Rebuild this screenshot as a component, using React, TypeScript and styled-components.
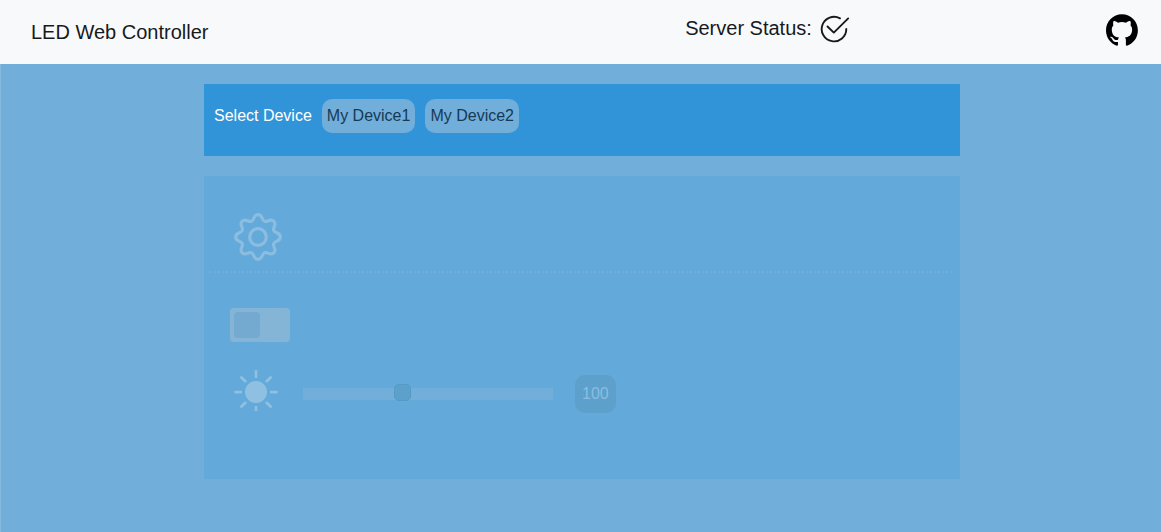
import React, { useState } from "react";
import styled, { createGlobalStyle } from "styled-components";
import { BsBrightnessHighFill } from "react-icons/bs";

const GlobalStyle = createGlobalStyle`
  *, *::before, *::after { box-sizing: border-box; }
  body {
    margin: 0;
    background: #71aeda;
    color: #212529;
    font: 16px/24px "Liberation Sans", Arial, sans-serif;
  }
`;

const Page = styled.div`
  display: flex;
  flex-direction: column;
  min-height: 100vh;
`;

const Header = styled.header`
  display: grid;
  grid-template-columns: 1fr auto 1fr;
  align-items: center;
  height: 64px;
  padding: 0 23px 0 31px;
  background: #f8f9fb;
  color: #17191b;
  font-size: 20px;
  line-height: 30px;
`;

const Brand = styled.a`
  color: inherit;
  text-decoration: none;
`;

const Status = styled.div`
  display: flex;
  align-items: center;
  gap: 8px;
  margin-left: 366px;
  padding-bottom: 8px;
`;

const RepoLink = styled.a`
  display: flex;
  justify-self: end;
  padding-bottom: 5px;
  color: #000;
`;

const Main = styled.main`
  display: flex;
  flex: 1;
  flex-direction: column;
  align-items: center;
  gap: 20px;
  padding: 20px 0 20px 2px;
  border-left: 1px solid #86b9df;
`;

const DeviceBar = styled.nav`
  display: flex;
  align-items: flex-start;
  gap: 10px;
  width: 100%;
  max-width: 756px;
  height: 72px;
  padding: 15px 10px;
  background: #3194d8;
`;

const DeviceLabel = styled.span`
  padding: 5px 0;
  color: #fff;
`;

const DeviceButton = styled.button`
  padding: 5px;
  border: 0;
  border-radius: 10px;
  background: #71aeda;
  color: #163a55;
  font: inherit;
  cursor: pointer;
`;

const Panel = styled.section`
  width: 100%;
  max-width: 756px;
  padding: 37px 5px 61px;
  background: #63a9d9;
`;

const SettingsButton = styled.button`
  display: flex;
  margin-left: 25px;
  padding: 0;
  border: 0;
  background: none;
  color: #8bbde1;
  cursor: pointer;
`;

const Divider = styled.hr`
  margin: 10px 3px 35px 0;
  border: 0;
  border-top: 2px dotted #70afdc;
`;

const Toggle = styled.input`
  display: block;
  width: 60px;
  height: 34px;
  margin: 0 0 28px 21px;
  padding: 4px;
  border-radius: 4px;
  background: #84b5d6;
  appearance: none;
  cursor: pointer;

  &::before {
    content: "";
    display: block;
    width: 26px;
    height: 26px;
    border-radius: 4px;
    background: #74a9d0;
  }

  &:checked::before {
    margin-left: auto;
  }
`;

const BrightnessRow = styled.div`
  display: flex;
  align-items: center;
  padding-left: 25px;
`;

const SunLabel = styled.label`
  display: flex;
  width: 44px;
  height: 41px;
  margin: 0 25px 7px 0;
  overflow: hidden;
  color: #8fc0e2;

  svg {
    flex: none;
  }
`;

const Slider = styled.input`
  width: 250px;
  height: 12px;
  margin: 0 22px 0 0;
  background: #71aeda;
  appearance: none;
  cursor: pointer;

  &::-webkit-slider-thumb {
    width: 17px;
    height: 17px;
    margin-top: -4px;
    border: 1px solid #5699c2;
    border-radius: 5px;
    background: #5ca0cc;
    appearance: none;
  }
`;

const Level = styled.output`
  padding: 7px;
  border-radius: 10px;
  background: #5ca0cb;
  color: #8bbde1;
`;

// A point at the given distance from the gear's centre, moved along the
// tangent there by the given length.
function polar(angle: number, radius: number, along = 0) {
  const x = 24 + radius * Math.sin(angle) + along * Math.cos(angle);
  const y = 24 - radius * Math.cos(angle) + along * Math.sin(angle);
  return `${x.toFixed(2)} ${y.toFixed(2)}`;
}

// Sixteen curves that run from peak to valley and back round the gear.
const gearOutline =
  `M${polar(0, 22.3)}` +
  Array.from({ length: 16 }, (_, i) => {
    const from = (i * Math.PI) / 8;
    const to = ((i + 1) * Math.PI) / 8;
    const leavesPeak = i % 2 === 0;
    const [r1, c1, r2, c2] = leavesPeak ? [22.3, 5, 17, 3.4] : [17, 3.4, 22.3, 5];
    return `C${polar(from, r1, c1)} ${polar(to, r2, -c2)} ${polar(to, r2)}`;
  }).join("") +
  "Z";

function GearIcon() {
  return (
    <svg width="48" height="48" viewBox="0 0 48 48" fill="none" stroke="currentColor" strokeWidth="3.2" strokeLinejoin="round">
      <path d={gearOutline} />
      <circle cx="24" cy="24" r="8.3" />
    </svg>
  );
}

function ConnectedIcon() {
  return (
    <svg width="30" height="30" viewBox="0 -1 30 30" fill="none" stroke="currentColor" strokeWidth="1.9" strokeLinecap="round" strokeLinejoin="round" role="img" aria-label="Connected">
      <path d="M20 4.3A12.3 12.3 0 1 0 26.3 15" />
      <path d="M7.5 12.5L13.8 18.6L28.2 4.4" />
    </svg>
  );
}

function GitHubIcon() {
  return (
    <svg width="32" height="32" viewBox="0 0 98 96" fill="currentColor">
      <path
        fillRule="evenodd"
        clipRule="evenodd"
        d="M48.854 0C21.839 0 0 22 0 49.217c0 21.756 13.993 40.172 33.405 46.69 2.427.49 3.316-1.059 3.316-2.362 0-1.141-.08-5.052-.08-9.127-13.59 2.934-16.42-5.867-16.42-5.867-2.184-5.704-5.42-7.17-5.42-7.17-4.448-3.015.324-3.015.324-3.015 4.934.326 7.523 5.052 7.523 5.052 4.367 7.496 11.404 5.378 14.235 4.074.404-3.178 1.699-5.378 3.074-6.6-10.839-1.141-22.243-5.378-22.243-24.283 0-5.378 1.94-9.778 5.014-13.2-.485-1.222-2.184-6.275.486-13.038 0 0 4.125-1.304 13.426 5.052a46.97 46.97 0 0 1 12.214-1.63c4.125 0 8.33.571 12.213 1.63 9.302-6.356 13.427-5.052 13.427-5.052 2.67 6.763.97 11.816.485 13.038 3.155 3.422 5.015 7.822 5.015 13.2 0 18.905-11.404 23.06-22.324 24.283 1.78 1.548 3.316 4.481 3.316 9.126 0 6.6-.08 11.897-.08 13.526 0 1.304.89 2.853 3.316 2.364 19.412-6.52 33.405-24.935 33.405-46.691C97.707 22 75.788 0 48.854 0z"
      />
    </svg>
  );
}

const devices = ["My Device1", "My Device2"];

export default function App() {
  const [brightness, setBrightness] = useState(100);

  return (
    <>
      <GlobalStyle />
      <Page>
        <Header>
          <Brand href="#">LED Web Controller</Brand>
          <Status>
            Server Status:
            <ConnectedIcon />
          </Status>
          <RepoLink href="#" aria-label="GitHub repository">
            <GitHubIcon />
          </RepoLink>
        </Header>
        <Main>
          <DeviceBar aria-label="Devices">
            <DeviceLabel>Select Device</DeviceLabel>
            {devices.map((name) => (
              <DeviceButton key={name} type="button">{name}</DeviceButton>
            ))}
          </DeviceBar>
          <Panel>
            <SettingsButton type="button" aria-label="Settings">
              <GearIcon />
            </SettingsButton>
            <Divider />
            <Toggle type="checkbox" aria-label="Power" />
            <BrightnessRow>
              <SunLabel htmlFor="brightness" aria-label="Brightness">
                <BsBrightnessHighFill size={44} />
              </SunLabel>
              <Slider
                id="brightness"
                type="range"
                min={0}
                max={255}
                value={brightness}
                onChange={(event) => setBrightness(Number(event.target.value))}
              />
              <Level htmlFor="brightness">{brightness}</Level>
            </BrightnessRow>
          </Panel>
        </Main>
      </Page>
    </>
  );
}
